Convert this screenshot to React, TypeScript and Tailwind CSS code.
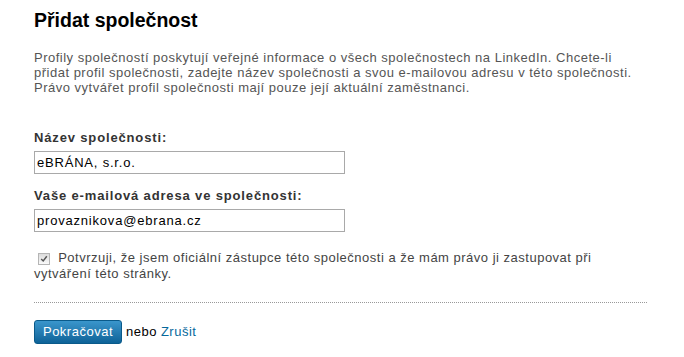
export default function App() {
  return (
    <div className="w-[684px] h-[357px] bg-white pl-[34px] pt-[6px] font-['Liberation_Sans',Arial,sans-serif] overflow-hidden">
      <div className="w-[613px]">
        <h1 className="text-[19.5px] leading-[28px] font-bold text-black">Přidat společnost</h1>

        <p className="mt-[16px] text-[13px] leading-[15px] tracking-[0.5px] text-[#555]">
          Profily společností poskytují veřejné informace o všech společnostech na LinkedIn. Chcete-li
          přidat profil společnosti, zadejte název společnosti a svou e-mailovou adresu v této
          společnosti. Právo vytvářet profil společnosti mají pouze její aktuální zaměstnanci.
        </p>

        <form className="mt-[35px]" onSubmit={(e) => e.preventDefault()}>
          <label className="block text-[13px] leading-[16px] font-bold tracking-[0.85px] text-[#333]">
            Název společnosti:
          </label>
          <input
            type="text"
            defaultValue="eBRÁNA, s.r.o."
            className="mt-[5px] block w-[311px] h-[23px] border border-[#a9a9a9] px-[2px] text-[13px] tracking-[0.8px] text-black outline-none"
          />

          <label className="mt-[14px] block text-[13px] leading-[16px] font-bold tracking-[0.85px] text-[#333]">
            Vaše e-mailová adresa ve společnosti:
          </label>
          <input
            type="text"
            defaultValue="provaznikova@ebrana.cz"
            className="mt-[5px] block w-[311px] h-[23px] border border-[#a9a9a9] px-[2px] text-[13px] tracking-[0.8px] text-black outline-none"
          />

          <div className="mt-[18px] text-[13px] leading-[16px] tracking-[0.5px] text-[#444]">
            <span className="inline-flex align-[-1px] mx-[4px] w-[12px] h-[12px] items-center justify-center border border-[#b5b5b5] bg-gradient-to-b from-[#dcdcdc] to-[#fafafa]">
              <svg viewBox="0 0 10 10" className="w-[8px] h-[8px]">
                <path d="M1.5 5 L4 7.5 L8.5 1.5" fill="none" stroke="#555" strokeWidth="1.8" />
              </svg>
            </span>{' '}
            Potvrzuji, že jsem oficiální zástupce této společnosti a že mám právo ji zastupovat při vytváření této stránky.
          </div>

          <div className="mt-[20px] border-t border-dotted border-[#999]" />

          <div className="mt-[17px] flex items-center gap-[4px] text-[13px] tracking-[0.5px]">
            <button
              type="submit"
              className="h-[24px] w-[88px] rounded-[3px] border border-[#0a5a8a] bg-gradient-to-b from-[#3a96cc] to-[#0d6398] text-white text-[13px] tracking-[0.5px]"
            >
              Pokračovat
            </button>
            <span className="text-black">nebo</span>
            <a href="#" className="text-[#06699c]">Zrušit</a>
          </div>
        </form>
      </div>
    </div>
  );
}
